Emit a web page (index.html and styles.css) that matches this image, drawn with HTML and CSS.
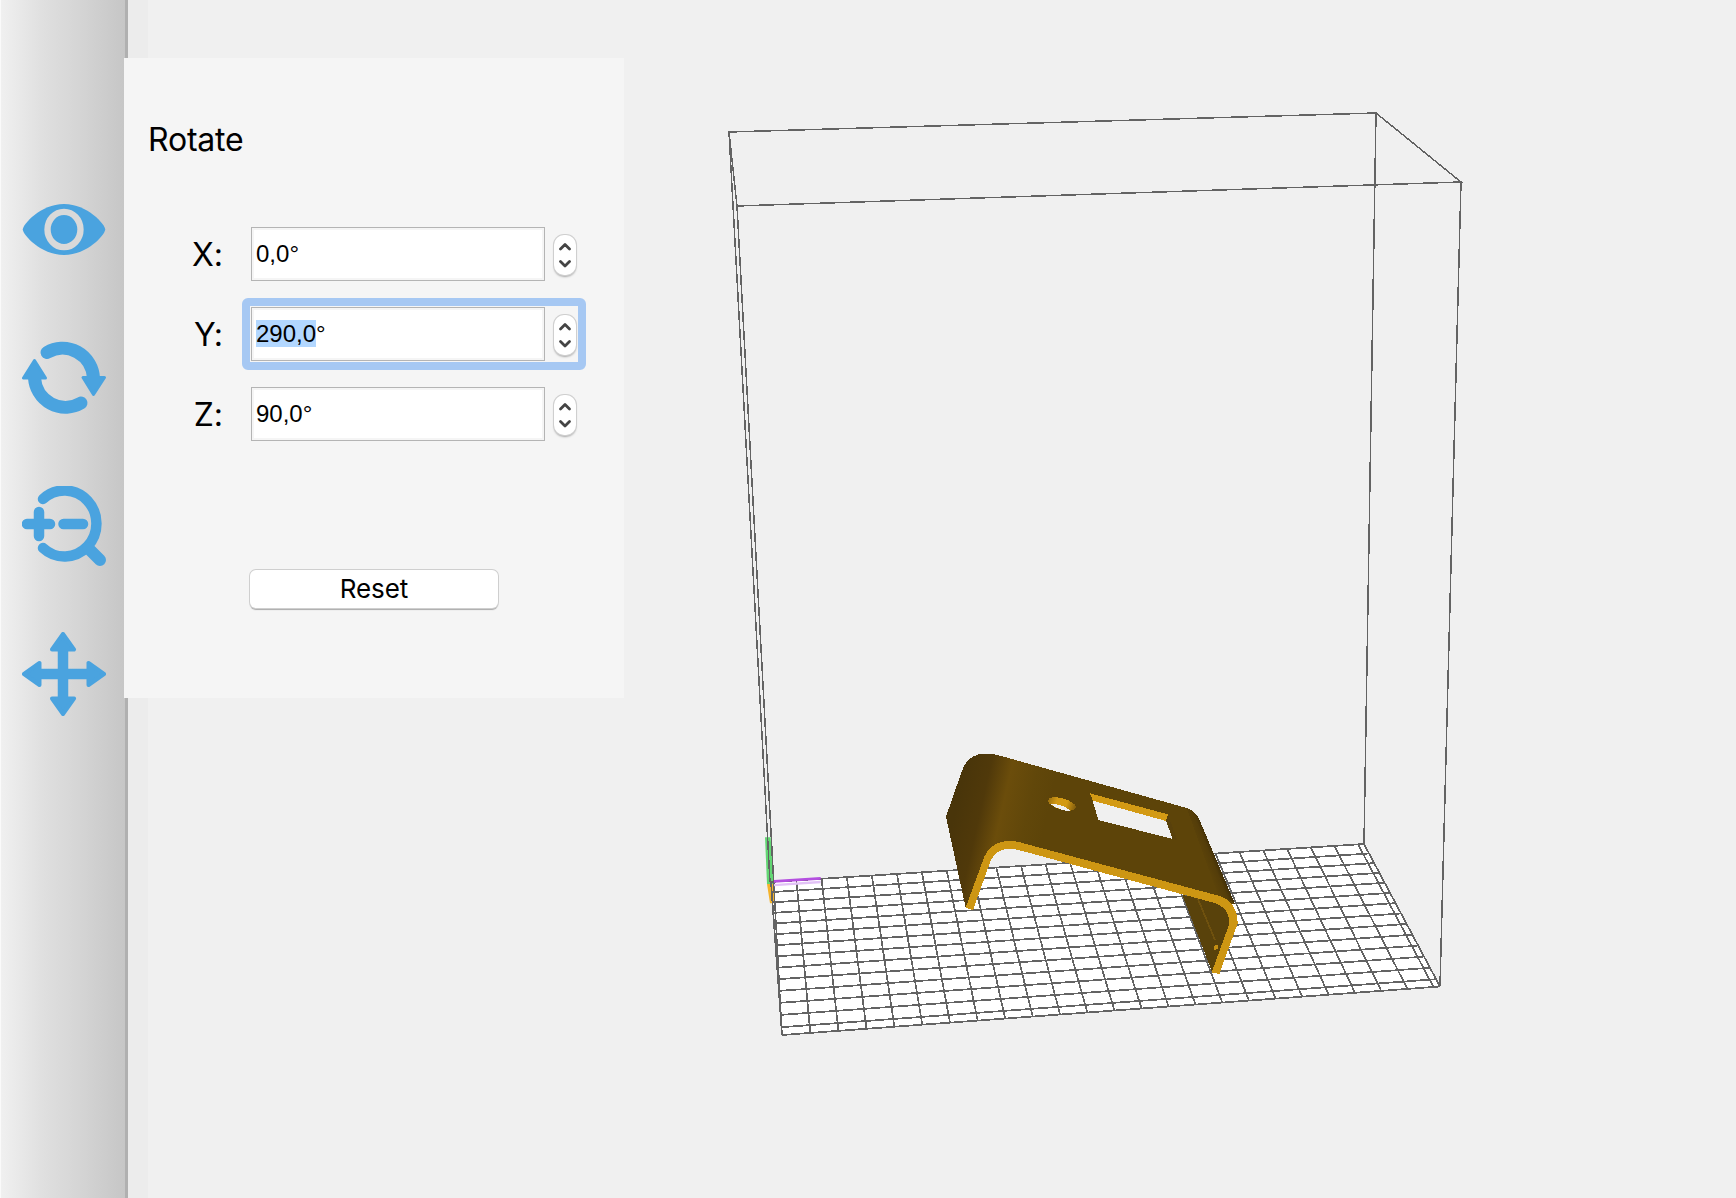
FILE: index.html
```html
<!DOCTYPE html>
<html lang="en">
<head>
<meta charset="utf-8">
<title>Rotate</title>
<link rel="stylesheet" href="styles.css">
</head>
<body>
<nav class="toolbar">
  <svg class="tool tool-view" viewBox="0 0 84 54"><path d="M0 27C0 22 18 1 42 1S84 22 84 27C84 32 66 53 42 53S0 32 0 27Z" fill="#4aa3df"/><ellipse cx="42" cy="27" rx="16.8" ry="18" fill="#4aa3df" stroke="#d9d9d9" stroke-width="6.5"/></svg>
  <svg class="tool tool-rotate" viewBox="0 0 84 76"><g fill="none" stroke="#4aa3df" stroke-width="13" stroke-linecap="round"><path d="M25 12.500A31 31.500 0 0 1 71.500 38"/><path d="M59 63A31 31.500 0 0 1 12.500 38"/></g><g fill="#4aa3df" stroke="#4aa3df" stroke-width="3" stroke-linejoin="round"><path d="M61 37.500H82.500L71.500 54.500Z"/><path d="M1.500 38H23.500L12.500 20.500Z"/></g></svg>
  <svg class="tool tool-zoom" viewBox="0 0 84 80"><g fill="none" stroke="#4aa3df" stroke-linecap="round"><path d="M21 13A32 33 0 1 1 21 62" stroke-width="10.500"/><path d="M66 62L78 74" stroke-width="12"/><path d="M5 38H28M17 26V50M41.500 38H61" stroke-width="10.500"/></g></svg>
  <svg class="tool tool-move" viewBox="0 0 84 84"><path d="M41 12V72M12 42H72" stroke="#4aa3df" stroke-width="10.500"/><g fill="#4aa3df" stroke="#4aa3df" stroke-width="4" stroke-linejoin="round"><path d="M41 2L52 17.500H30Z"/><path d="M41 82L52 66.500H30Z"/><path d="M2 42L17.500 31V53Z"/><path d="M82 42L66.500 31V53Z"/></g></svg>
</nav>
<main class="viewport">
  <svg class="scene" viewBox="128 0 1608 1198">
    <path class="floor" d="M771 882L1364 844L1440 986.500L782 1035Z"/>
    <g transform="translate(750 820) scale(.33333)">
      <path d="M45 52H62L71 192H51Z" fill="#62d673"/>
      <path d="M51 192H71L73 250H60Z" fill="#f4b32c"/>
    </g>
    <path class="wire grid" id="grid"/>
    <path class="wire" d="M729 132L1376 113L1461 182L737 206ZM729 132L770 882M1376 113L1364 844M1461 182L1440 986M737 206L782 1035"/>
    <g transform="translate(750 820) scale(.33333)">
      <path d="M72 192L212 182V190L72 199Z" fill="#e2c2f6"/>
      <path d="M72 180L212 171V179L72 188Z" fill="#b44fe0"/>
    </g>
    <g transform="translate(930 740) scale(.33333)" shape-rendering="crispEdges">
      <path d="M757 465L847 698L902 545L895 490Z" fill="#59420b"/>
      <path d="M803 475L855 600" stroke="#6f510e" stroke-width="5"/>
      <path d="M853 617L864 614V627L853 630Z" fill="#c48e12"/>
      <path d="M48 230L95 95Q112 42 165 41Q190 41 210 47L770 204Q795 212 808 238L915 492L900 492L865 470L245 308L180 350L122 503H107Z" fill="url(#shell)"/>
      <path d="M770 204Q795 212 808 238L915 492Q897 475 865 468Z" fill="url(#bend)"/>
      <path d="M107 503L163 350Q186 303 240 303Q255 303 270 307L865 467Q922 484 923 550L868 702L845 697L897 555Q903 505 850 488L262 329Q204 317 182 362L129 510Z" fill="#cd9613"/>
      <path d="M480 160L714 225L742 300L505 240Z" fill="#59410b"/>
      <path d="M480 160L714 223L708 243L488 182Z" fill="#d39a14"/>
      <path d="M488 182L708 243L728 297L505 240Z" fill="#f0f0f0"/>
      <ellipse cx="396" cy="192" rx="43" ry="17" transform="rotate(16 396 192)" fill="url(#bore)"/>
      <path d="M360 192Q375 190 405 200L422 213Q393 214 360 192Z" fill="#f0f0f0"/>
    </g>
    <defs>
      <linearGradient id="shell" gradientUnits="userSpaceOnUse" x1="65" y1="260" x2="330" y2="320">
        <stop offset="0" stop-color="#49350a"/><stop offset=".27" stop-color="#50390a"/><stop offset=".5" stop-color="#6b4d0b"/><stop offset=".78" stop-color="#61470a"/><stop offset="1" stop-color="#5d4409"/>
      </linearGradient>
      <linearGradient id="bend" gradientUnits="userSpaceOnUse" x1="815" y1="350" x2="862" y2="331">
        <stop offset="0" stop-color="#5d4409"/><stop offset=".5" stop-color="#543d09"/><stop offset="1" stop-color="#302307"/>
      </linearGradient>
      <linearGradient id="bore"><stop offset="0" stop-color="#9c7010"/><stop offset=".3" stop-color="#d39a14"/><stop offset=".65" stop-color="#d39a14"/><stop offset="1" stop-color="#7f5b0d"/></linearGradient>
    </defs>
  </svg>
</main>
<section class="panel">
  <h1 class="title">Rotate</h1>
  <div class="axes">
    <div class="axis"><label class="name">X:</label><div class="spin"><div class="field"><span>0,0</span>°</div><div class="stepper"><svg viewBox="0 0 22 40"><path d="M6.500 14L11 9.500L15.500 14M6.500 26.500L11 31L15.500 26.500"/></svg></div></div></div>
    <div class="axis"><label class="name">Y:</label><div class="spin focused"><div class="field"><span class="selected">290,0</span>°</div><div class="stepper"><svg viewBox="0 0 22 40"><path d="M6.500 14L11 9.500L15.500 14M6.500 26.500L11 31L15.500 26.500"/></svg></div></div></div>
    <div class="axis"><label class="name">Z:</label><div class="spin"><div class="field"><span>90,0</span>°</div><div class="stepper"><svg viewBox="0 0 22 40"><path d="M6.500 14L11 9.500L15.500 14M6.500 26.500L11 31L15.500 26.500"/></svg></div></div></div>
  </div>
  <button class="reset">Reset</button>
</section>
<script src="grid.js"></script>
</body>
</html>
```
FILE: styles.css
```css
* { box-sizing: border-box; }
body {
  margin: 0;
  width: 1736px;
  height: 1198px;
  display: flex;
  position: relative;
  overflow: hidden;
  background: #f0f0f0;
  color: #000;
  font-family: Inter, "Liberation Sans", sans-serif;
}
svg { display: block; }
.toolbar {
  width: 128px;
  flex: none;
  padding: 203px 0 0 21px;
  border-left: 1px solid #fafafa;
  border-right: 3px solid #b0b0b0;
  background: linear-gradient(90deg, #f0f0f0, #e0e0e0 32%, #d6d6d6 60%, #c6c6c6);
}
.tool { width: 84px; }
.tool-view { height: 53px; }
.tool-rotate { height: 76px; margin-top: 84px; }
.tool-zoom { height: 80px; margin-top: 70px; }
.tool-move { height: 84px; margin-top: 66px; }
.viewport {
  width: 1608px;
  background: linear-gradient(90deg, #ececec 20px, #f0f0f0 20px);
}
.scene { width: 1608px; height: 1198px; }
.floor { fill: #fff; }
.wire {
  fill: none;
  stroke: #636363;
  stroke-width: 1.5;
  shape-rendering: crispEdges;
}
.grid { stroke-width: 1.7; }
.panel {
  position: absolute;
  left: 124px;
  top: 58px;
  width: 500px;
  height: 640px;
  padding: 62px 0 0 24px;
  background: #f5f5f5;
}
.title {
  margin: 0;
  font-size: 32px;
  line-height: 40px;
  font-weight: 430;
  letter-spacing: -0.2px;
}
.axes {
  display: grid;
  gap: 24px;
  margin-top: 66px;
}
.axis {
  display: flex;
  align-items: center;
  height: 56px;
}
.name {
  width: 75px;
  margin-right: 27px;
  padding-top: 1px;
  text-align: right;
  font-size: 32px;
  line-height: 40px;
  font-weight: 430;
  font-feature-settings: "calt" 0;
}
.spin {
  position: relative;
  width: 328px;
  height: 56px;
  padding: 1px;
  display: flex;
  align-items: center;
  gap: 9px;
}
.focused::before {
  content: "";
  position: absolute;
  inset: -8px;
  border: 8px solid #a6c8f3;
  border-radius: 6px;
}
.field {
  width: 294px;
  height: 54px;
  padding: 12px 0 0 4px;
  border: 1px solid #b4b4b4;
  box-shadow: inset 0 0 0 2px #f5f5f5;
  background: #fff;
  font: 24px/27px "Liberation Sans", Arial, sans-serif;
}
.selected { background: #b2d7ff; }
.stepper {
  width: 22px;
  height: 40px;
  margin-top: 2px;
  border-radius: 10px;
  background: #fff;
  box-shadow: 0 0 0 1px #cfcfcf, 0 2px 2px #aaa;
}
.stepper path {
  fill: none;
  stroke: #444;
  stroke-width: 2.8;
  stroke-linecap: round;
  stroke-linejoin: round;
}
.reset {
  display: block;
  width: 248px;
  height: 38px;
  margin: 128px 0 0 102px;
  padding: 0;
  border: 0;
  border-radius: 6px;
  background: #fff;
  box-shadow: 0 0 0 1px #cfcfcf, 0 1.500px 1px #aaa;
  color: #000;
  font: 430 26px/38px Inter, "Liberation Sans", sans-serif;
  letter-spacing: -0.1px;
}
```
FILE: grid.js
```js
// Projects the build plate's grid lines onto its four screen corners.
const corners = [[771, 882], [1364, 844], [1440, 986.5], [782, 1035]];
const [[x0, y0], [x1, y1], [x2, y2], [x3, y3]] = corners;
const dx1 = x1 - x2, dx2 = x3 - x2, sx = x0 - x1 + x2 - x3;
const dy1 = y1 - y2, dy2 = y3 - y2, sy = y0 - y1 + y2 - y3;
const det = dx1 * dy2 - dx2 * dy1;
const g = (sx * dy2 - dx2 * sy) / det;
const h = (dx1 * sy - sx * dy1) / det;

function project(u, v) {
  const w = g * u + h * v + 1;
  const x = ((x1 - x0 + g * x1) * u + (x3 - x0 + h * x3) * v + x0) / w;
  const y = ((y1 - y0 + g * y1) * u + (y3 - y0 + h * y3) * v + y0) / w;
  return x.toFixed(1) + " " + y.toFixed(1);
}

const columns = 24.25, rows = 13.63;
let d = "";
for (let i = 0; i <= columns + 1; i++) {
  const u = Math.min(i / columns, 1);
  d += "M" + project(u, 0) + "L" + project(u, 1);
}
for (let j = 0; j <= rows + 1; j++) {
  const v = Math.min(j / rows, 1);
  d += "M" + project(0, v) + "L" + project(1, v);
}
document.getElementById("grid").setAttribute("d", d);
```
